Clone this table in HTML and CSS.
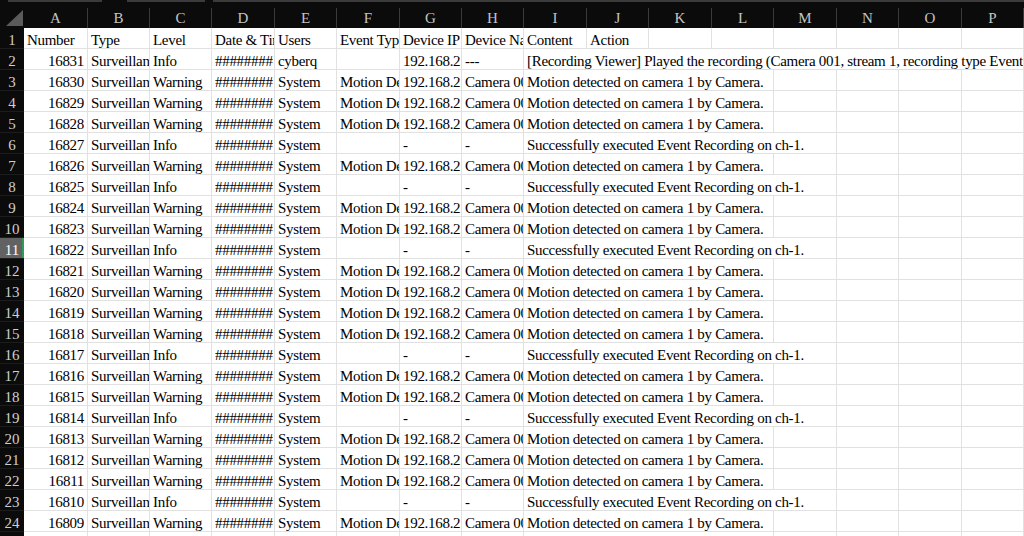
FILE: index.html
```html
<!DOCTYPE html>
<html>
<head>
<meta charset="utf-8">
<link rel="stylesheet" href="styles.css">
</head>
<body>
<div class="topbar"><div class="seg seg-name"></div><div class="seg seg-btn"></div><div class="seg seg-formula"></div></div>
<div class="sheet">
  <div class="row colhdr">
    <div class="corner"><svg width="17" height="16" viewBox="0 0 17 16"><polygon points="17,0 17,16 0,16" fill="#5b5b5b"/></svg></div>
    <div class="ch">A</div><div class="ch">B</div><div class="ch">C</div><div class="ch">D</div><div class="ch">E</div><div class="ch">F</div><div class="ch">G</div><div class="ch">H</div><div class="ch">I</div><div class="ch">J</div><div class="ch">K</div><div class="ch">L</div><div class="ch">M</div><div class="ch">N</div><div class="ch">O</div><div class="ch">P</div>
  </div>
  <div class="row"><div class="rn">1</div><div class="c">Number</div><div class="c">Type</div><div class="c">Level</div><div class="c">Date &amp; Time</div><div class="c">Users</div><div class="c">Event Type</div><div class="c">Device IP</div><div class="c">Device Name</div><div class="c">Content</div><div class="c">Action</div><div class="c"></div><div class="c"></div><div class="c"></div><div class="c"></div><div class="c"></div><div class="c"></div></div>
  <div class="row"><div class="rn">2</div><div class="c n">16831</div><div class="c">Surveillance</div><div class="c">Info</div><div class="c">########</div><div class="c">cyberq</div><div class="c"></div><div class="c">192.168.2.100</div><div class="c">---</div><div class="c s8">[Recording Viewer] Played the recording (Camera 001, stream 1, recording type Event Recording)</div></div>
  <div class="row"><div class="rn">3</div><div class="c n">16830</div><div class="c">Surveillance</div><div class="c">Warning</div><div class="c">########</div><div class="c">System</div><div class="c">Motion Detection</div><div class="c">192.168.2.100</div><div class="c">Camera 001</div><div class="c s4">Motion detected on camera 1 by Camera.</div><div class="c"></div><div class="c"></div><div class="c"></div><div class="c"></div></div>
  <div class="row"><div class="rn">4</div><div class="c n">16829</div><div class="c">Surveillance</div><div class="c">Warning</div><div class="c">########</div><div class="c">System</div><div class="c">Motion Detection</div><div class="c">192.168.2.100</div><div class="c">Camera 001</div><div class="c s4">Motion detected on camera 1 by Camera.</div><div class="c"></div><div class="c"></div><div class="c"></div><div class="c"></div></div>
  <div class="row"><div class="rn">5</div><div class="c n">16828</div><div class="c">Surveillance</div><div class="c">Warning</div><div class="c">########</div><div class="c">System</div><div class="c">Motion Detection</div><div class="c">192.168.2.100</div><div class="c">Camera 001</div><div class="c s4">Motion detected on camera 1 by Camera.</div><div class="c"></div><div class="c"></div><div class="c"></div><div class="c"></div></div>
  <div class="row"><div class="rn">6</div><div class="c n">16827</div><div class="c">Surveillance</div><div class="c">Info</div><div class="c">########</div><div class="c">System</div><div class="c"></div><div class="c">-</div><div class="c">-</div><div class="c s5">Successfully executed Event Recording on ch-1.</div><div class="c"></div><div class="c"></div><div class="c"></div></div>
  <div class="row"><div class="rn">7</div><div class="c n">16826</div><div class="c">Surveillance</div><div class="c">Warning</div><div class="c">########</div><div class="c">System</div><div class="c">Motion Detection</div><div class="c">192.168.2.100</div><div class="c">Camera 001</div><div class="c s4">Motion detected on camera 1 by Camera.</div><div class="c"></div><div class="c"></div><div class="c"></div><div class="c"></div></div>
  <div class="row"><div class="rn">8</div><div class="c n">16825</div><div class="c">Surveillance</div><div class="c">Info</div><div class="c">########</div><div class="c">System</div><div class="c"></div><div class="c">-</div><div class="c">-</div><div class="c s5">Successfully executed Event Recording on ch-1.</div><div class="c"></div><div class="c"></div><div class="c"></div></div>
  <div class="row"><div class="rn">9</div><div class="c n">16824</div><div class="c">Surveillance</div><div class="c">Warning</div><div class="c">########</div><div class="c">System</div><div class="c">Motion Detection</div><div class="c">192.168.2.100</div><div class="c">Camera 001</div><div class="c s4">Motion detected on camera 1 by Camera.</div><div class="c"></div><div class="c"></div><div class="c"></div><div class="c"></div></div>
  <div class="row"><div class="rn">10</div><div class="c n">16823</div><div class="c">Surveillance</div><div class="c">Warning</div><div class="c">########</div><div class="c">System</div><div class="c">Motion Detection</div><div class="c">192.168.2.100</div><div class="c">Camera 001</div><div class="c s4">Motion detected on camera 1 by Camera.</div><div class="c"></div><div class="c"></div><div class="c"></div><div class="c"></div></div>
  <div class="row"><div class="rn active">11</div><div class="c n">16822</div><div class="c">Surveillance</div><div class="c">Info</div><div class="c">########</div><div class="c">System</div><div class="c"></div><div class="c">-</div><div class="c">-</div><div class="c s5">Successfully executed Event Recording on ch-1.</div><div class="c"></div><div class="c"></div><div class="c"></div></div>
  <div class="row"><div class="rn">12</div><div class="c n">16821</div><div class="c">Surveillance</div><div class="c">Warning</div><div class="c">########</div><div class="c">System</div><div class="c">Motion Detection</div><div class="c">192.168.2.100</div><div class="c">Camera 001</div><div class="c s4">Motion detected on camera 1 by Camera.</div><div class="c"></div><div class="c"></div><div class="c"></div><div class="c"></div></div>
  <div class="row"><div class="rn">13</div><div class="c n">16820</div><div class="c">Surveillance</div><div class="c">Warning</div><div class="c">########</div><div class="c">System</div><div class="c">Motion Detection</div><div class="c">192.168.2.100</div><div class="c">Camera 001</div><div class="c s4">Motion detected on camera 1 by Camera.</div><div class="c"></div><div class="c"></div><div class="c"></div><div class="c"></div></div>
  <div class="row"><div class="rn">14</div><div class="c n">16819</div><div class="c">Surveillance</div><div class="c">Warning</div><div class="c">########</div><div class="c">System</div><div class="c">Motion Detection</div><div class="c">192.168.2.100</div><div class="c">Camera 001</div><div class="c s4">Motion detected on camera 1 by Camera.</div><div class="c"></div><div class="c"></div><div class="c"></div><div class="c"></div></div>
  <div class="row"><div class="rn">15</div><div class="c n">16818</div><div class="c">Surveillance</div><div class="c">Warning</div><div class="c">########</div><div class="c">System</div><div class="c">Motion Detection</div><div class="c">192.168.2.100</div><div class="c">Camera 001</div><div class="c s4">Motion detected on camera 1 by Camera.</div><div class="c"></div><div class="c"></div><div class="c"></div><div class="c"></div></div>
  <div class="row"><div class="rn">16</div><div class="c n">16817</div><div class="c">Surveillance</div><div class="c">Info</div><div class="c">########</div><div class="c">System</div><div class="c"></div><div class="c">-</div><div class="c">-</div><div class="c s5">Successfully executed Event Recording on ch-1.</div><div class="c"></div><div class="c"></div><div class="c"></div></div>
  <div class="row"><div class="rn">17</div><div class="c n">16816</div><div class="c">Surveillance</div><div class="c">Warning</div><div class="c">########</div><div class="c">System</div><div class="c">Motion Detection</div><div class="c">192.168.2.100</div><div class="c">Camera 001</div><div class="c s4">Motion detected on camera 1 by Camera.</div><div class="c"></div><div class="c"></div><div class="c"></div><div class="c"></div></div>
  <div class="row"><div class="rn">18</div><div class="c n">16815</div><div class="c">Surveillance</div><div class="c">Warning</div><div class="c">########</div><div class="c">System</div><div class="c">Motion Detection</div><div class="c">192.168.2.100</div><div class="c">Camera 001</div><div class="c s4">Motion detected on camera 1 by Camera.</div><div class="c"></div><div class="c"></div><div class="c"></div><div class="c"></div></div>
  <div class="row"><div class="rn">19</div><div class="c n">16814</div><div class="c">Surveillance</div><div class="c">Info</div><div class="c">########</div><div class="c">System</div><div class="c"></div><div class="c">-</div><div class="c">-</div><div class="c s5">Successfully executed Event Recording on ch-1.</div><div class="c"></div><div class="c"></div><div class="c"></div></div>
  <div class="row"><div class="rn">20</div><div class="c n">16813</div><div class="c">Surveillance</div><div class="c">Warning</div><div class="c">########</div><div class="c">System</div><div class="c">Motion Detection</div><div class="c">192.168.2.100</div><div class="c">Camera 001</div><div class="c s4">Motion detected on camera 1 by Camera.</div><div class="c"></div><div class="c"></div><div class="c"></div><div class="c"></div></div>
  <div class="row"><div class="rn">21</div><div class="c n">16812</div><div class="c">Surveillance</div><div class="c">Warning</div><div class="c">########</div><div class="c">System</div><div class="c">Motion Detection</div><div class="c">192.168.2.100</div><div class="c">Camera 001</div><div class="c s4">Motion detected on camera 1 by Camera.</div><div class="c"></div><div class="c"></div><div class="c"></div><div class="c"></div></div>
  <div class="row"><div class="rn">22</div><div class="c n">16811</div><div class="c">Surveillance</div><div class="c">Warning</div><div class="c">########</div><div class="c">System</div><div class="c">Motion Detection</div><div class="c">192.168.2.100</div><div class="c">Camera 001</div><div class="c s4">Motion detected on camera 1 by Camera.</div><div class="c"></div><div class="c"></div><div class="c"></div><div class="c"></div></div>
  <div class="row"><div class="rn">23</div><div class="c n">16810</div><div class="c">Surveillance</div><div class="c">Info</div><div class="c">########</div><div class="c">System</div><div class="c"></div><div class="c">-</div><div class="c">-</div><div class="c s5">Successfully executed Event Recording on ch-1.</div><div class="c"></div><div class="c"></div><div class="c"></div></div>
  <div class="row"><div class="rn">24</div><div class="c n">16809</div><div class="c">Surveillance</div><div class="c">Warning</div><div class="c">########</div><div class="c">System</div><div class="c">Motion Detection</div><div class="c">192.168.2.100</div><div class="c">Camera 001</div><div class="c s4">Motion detected on camera 1 by Camera.</div><div class="c"></div><div class="c"></div><div class="c"></div><div class="c"></div></div>
  <div class="row"><div class="rn">25</div><div class="c n">16808</div><div class="c">Surveillance</div><div class="c">Warning</div><div class="c">########</div><div class="c">System</div><div class="c">Motion Detection</div><div class="c">192.168.2.100</div><div class="c">Camera 001</div><div class="c s4">Motion detected on camera 1 by Camera.</div><div class="c"></div><div class="c"></div><div class="c"></div><div class="c"></div></div>
</div>
</body>
</html>
```
FILE: styles.css
```css
html, body {
  margin: 0;
  padding: 0;
}
body {
  width: 1024px;
  height: 536px;
  overflow: hidden;
  background: #ffffff;
  font-family: "Liberation Serif", "Times New Roman", serif;
}
.topbar {
  height: 8px;
  background: #0b0b0b;
  display: flex;
  align-items: flex-start;
}
.seg {
  height: 2px;
  background: #3b3b3b;
}
.seg-name { width: 94px; margin-left: 8px; }
.seg-btn { width: 78px; margin-left: 25px; }
.seg-formula { flex: 1; margin-left: 8px; }
.sheet {
  display: flex;
  flex-direction: column;
}
.row {
  display: grid;
  grid-template-columns: 24px 64px 62px 62px 63px 62px 63px 62px 62px 63px 62px 63px 62px 63px 62px 63px 62px;
  height: 21px;
}
.colhdr {
  height: 20px;
  background: #0b0b0b;
}
.corner {
  display: flex;
  align-items: flex-end;
  justify-content: flex-end;
  padding: 0 1px 2px 0;
}
.ch {
  box-sizing: border-box;
  border-right: 1px solid #3a3a3a;
  color: #c4c4c4;
  font-size: 15px;
  padding-top: 1px;
  line-height: 19px;
  text-align: center;
}
.ch:first-of-type {
  border-left: 1px solid #3a3a3a;
}
.rn {
  box-sizing: border-box;
  background: #0b0b0b;
  color: #cfcfcf;
  font-size: 15px;
  padding-top: 3px;
  line-height: 18px;
  text-align: center;
  border-bottom: 1px solid #1c1c1c;
  overflow: hidden;
}
.rn.active {
  background: #626262;
  color: #ffffff;
  box-shadow: inset -2px 0 0 #2e9a5c;
}
.c {
  box-sizing: border-box;
  border-right: 1px solid #e1e1e1;
  border-bottom: 1px solid #e1e1e1;
  padding: 3px 3px 0 3px;
  font-size: 15px;
  letter-spacing: -0.3px;
  line-height: 18px;
  color: #000000;
  white-space: nowrap;
  overflow: hidden;
}
.n { text-align: right; padding-right: 3px; }
.s4 { grid-column: span 4; }
.s5 { grid-column: span 5; }
.s8 { grid-column: span 8; }
```
